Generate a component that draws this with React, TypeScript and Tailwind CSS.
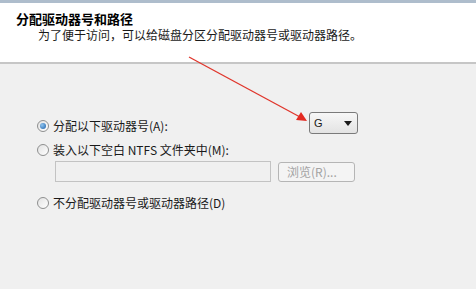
import React from "react";

const FONT = { fontFamily: '"Noto Sans CJK SC", "Noto Sans", sans-serif' };

function Radio({ checked }: { checked?: boolean }) {
  return (
    <span className="flex h-[12px] w-[12px] shrink-0 items-center justify-center rounded-full border border-[#8e8f8f] bg-gradient-to-br from-[#e2e2e2] to-[#ffffff]">
      {checked && (
        <span className="h-[6px] w-[6px] rounded-full bg-[radial-gradient(circle_at_35%_35%,#8fc4ef,#1c5fa8)]" />
      )}
    </span>
  );
}

export default function App() {
  return (
    <div
      className="relative h-[289px] w-[476px] overflow-hidden bg-[#f0f0f0] text-[12px] text-[#1a1a1a]"
      style={FONT}
    >
      {/* header */}
      <div className="h-[64px] border-t-[3px] border-b-2 border-t-[#aebdcc] border-b-[#c6c6c6] bg-white pl-4 pt-[9px]">
        <div className="text-[13px] font-bold leading-[14px] text-black">分配驱动器号和路径</div>
        <div className="mt-[2px] pl-[22px] leading-[14px]">为了便于访问，可以给磁盘分区分配驱动器号或驱动器路径。</div>
      </div>

      {/* options */}
      <div className="w-[358px] pl-[37px] pt-[48px]">
        <div className="flex h-[22px] items-center">
          <div className="mt-[5px] flex items-center gap-[4px]">
            <Radio checked />
            <span className="leading-4">分配以下驱动器号(A):</span>
          </div>
          <div className="ml-auto flex h-[22px] w-[49px] items-center justify-between rounded-[3px] border border-[#7a7a7a] bg-gradient-to-b from-[#f7f7f7] to-[#e3e3e3] pl-[4px] pr-[5px]">
            <span className="text-[11px] leading-none" style={{ fontFamily: '"Liberation Sans", sans-serif' }}>
              G
            </span>
            <svg width="8" height="5" viewBox="0 0 8 5">
              <path d="M0 0h8L4 5z" fill="#1a1a1a" />
            </svg>
          </div>
        </div>

        <div className="mt-[8px] flex h-4 items-center gap-[4px]">
          <Radio />
          <span className="leading-4">装入以下空白 NTFS 文件夹中(M):</span>
        </div>

        <div className="ml-[18px] mt-[3px] flex items-center gap-[7px]">
          <div className="h-[21px] w-[216px] border border-[#c3c3c3] bg-[#f0f0f0]" />
          <div className="flex h-[20px] w-[77px] items-center rounded-[3px] border border-[#b5b5b5] bg-[#f4f4f4] pl-[8px] text-[#a3a3a3]">
            浏览(R)...
          </div>
        </div>

        <div className="mt-[13px] flex h-4 items-center gap-[4px]">
          <Radio />
          <span className="leading-4">不分配驱动器号或驱动器路径(D)</span>
        </div>
      </div>

      {/* red annotation arrow */}
      <svg className="pointer-events-none absolute inset-0" width="476" height="289">
        <line x1="189" y1="57" x2="300" y2="117" stroke="#e0352b" strokeWidth="1.3" />
        <polygon points="307,121 296,120 301,112" fill="#e32a22" />
      </svg>
    </div>
  );
}
